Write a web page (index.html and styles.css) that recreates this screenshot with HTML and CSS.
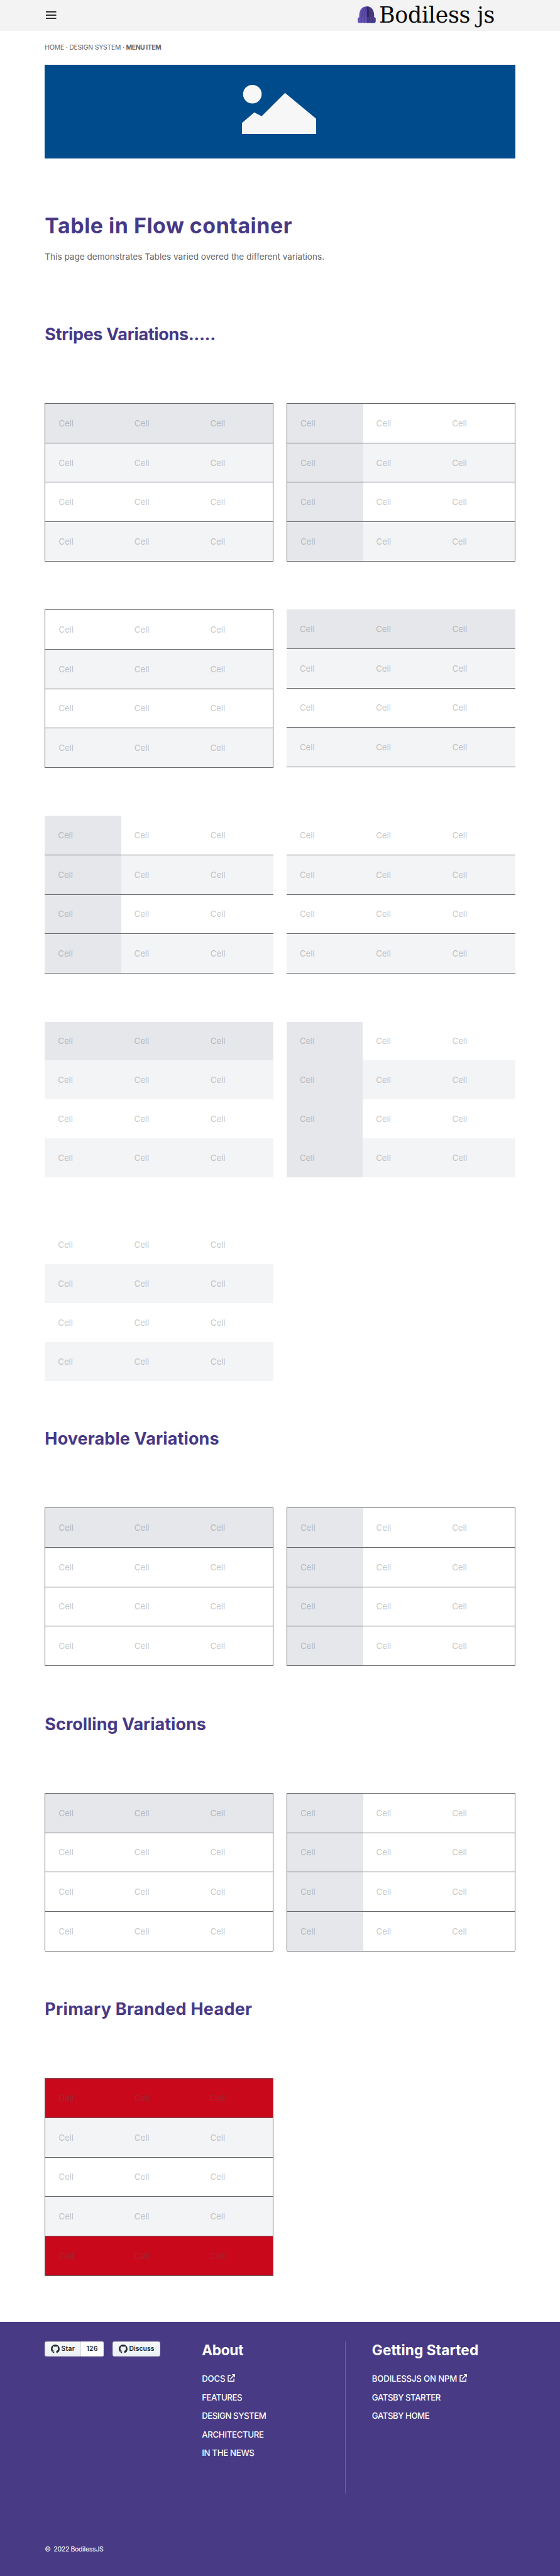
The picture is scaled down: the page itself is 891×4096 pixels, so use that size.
FILE: index.html
```html
<!DOCTYPE html>
<html lang="en">
<head>
<meta charset="utf-8">
<title>Table in Flow container</title>
<link rel="stylesheet" href="styles.css">
</head>
<body>
<header class="header">
  <svg class="menu-icon" viewBox="0 0 19 14"><path d="M0 0h19v2H0zM0 6h19v2H0zM0 12h19v2H0z" fill="#222"/></svg>
  <div class="logo">
    <svg class="hat" viewBox="0 0 33 31">
      <path d="M3 21C2 8 7 0.3 16.500 0.300S31 8 30 21z" fill="#5f4db0"/>
      <path d="M17 0.300C26 0.500 31 8 30 21H17z" fill="#493b8a"/>
      <path d="M8 21C8 12 10 5 14 2M13 21c0-9 1-15 3-20M24 21c0-8-1-15-5-19M28 21c0-8-2-13-5-17" fill="none" stroke="#3b2f6e" stroke-width=".8"/>
      <path d="M17.500 21c0-8 .5-15-.5-20M20.500 21c0-8 0-14-2-19" fill="none" stroke="#2a204f" stroke-width="1.200"/>
      <rect x="0.200" y="20" width="32.600" height="10.500" rx="2.500" fill="#6452b4"/>
      <path d="M17 20h13.300a2.500 2.500 0 0 1 2.500 2.500V28a2.500 2.500 0 0 1-2.500 2.500H17z" fill="#4b3d90"/>
      <path d="M6.500 20.500v9.500M12 20.500v9.500M17.500 20.500v9.500M21 20.500v9.500M26.500 20.500v9.500" stroke="#3b2f6e" stroke-width=".9"/>
    </svg>
    <span class="wordmark">Bodiless js</span>
  </div>
</header>
<main class="main">
  <nav class="crumbs">HOME · DESIGN SYSTEM · <b>MENU ITEM</b></nav>
  <div class="hero">
    <svg class="hero-art" viewBox="0 0 136 90"><circle cx="19" cy="17" r="17" fill="#f7f7f7"/><path d="M0 69.400 22.500 50.300 36 57.300 78.700 14.600 135.600 61.800V90H0z" fill="#f7f7f7"/></svg>
  </div>
  <h1 class="title">Table in Flow container</h1>
  <p class="intro">This page demonstrates Tables varied overed the different variations.</p>

  <h2 class="heading heading-first">Stripes Variations.....</h2>
  <div class="tables">
    <div class="table boxed striped head-row"><div class="row"><span>Cell</span><span>Cell</span><span>Cell</span></div><div class="row"><span>Cell</span><span>Cell</span><span>Cell</span></div><div class="row"><span>Cell</span><span>Cell</span><span>Cell</span></div><div class="row"><span>Cell</span><span>Cell</span><span>Cell</span></div></div>
    <div class="table boxed striped head-col"><div class="row"><span>Cell</span><span>Cell</span><span>Cell</span></div><div class="row"><span>Cell</span><span>Cell</span><span>Cell</span></div><div class="row"><span>Cell</span><span>Cell</span><span>Cell</span></div><div class="row"><span>Cell</span><span>Cell</span><span>Cell</span></div></div>
    <div class="table boxed striped"><div class="row"><span>Cell</span><span>Cell</span><span>Cell</span></div><div class="row"><span>Cell</span><span>Cell</span><span>Cell</span></div><div class="row"><span>Cell</span><span>Cell</span><span>Cell</span></div><div class="row"><span>Cell</span><span>Cell</span><span>Cell</span></div></div>
    <div class="table lined striped head-row"><div class="row"><span>Cell</span><span>Cell</span><span>Cell</span></div><div class="row"><span>Cell</span><span>Cell</span><span>Cell</span></div><div class="row"><span>Cell</span><span>Cell</span><span>Cell</span></div><div class="row"><span>Cell</span><span>Cell</span><span>Cell</span></div></div>
    <div class="table lined striped head-col"><div class="row"><span>Cell</span><span>Cell</span><span>Cell</span></div><div class="row"><span>Cell</span><span>Cell</span><span>Cell</span></div><div class="row"><span>Cell</span><span>Cell</span><span>Cell</span></div><div class="row"><span>Cell</span><span>Cell</span><span>Cell</span></div></div>
    <div class="table lined striped"><div class="row"><span>Cell</span><span>Cell</span><span>Cell</span></div><div class="row"><span>Cell</span><span>Cell</span><span>Cell</span></div><div class="row"><span>Cell</span><span>Cell</span><span>Cell</span></div><div class="row"><span>Cell</span><span>Cell</span><span>Cell</span></div></div>
    <div class="table plain striped head-row"><div class="row"><span>Cell</span><span>Cell</span><span>Cell</span></div><div class="row"><span>Cell</span><span>Cell</span><span>Cell</span></div><div class="row"><span>Cell</span><span>Cell</span><span>Cell</span></div><div class="row"><span>Cell</span><span>Cell</span><span>Cell</span></div></div>
    <div class="table plain striped head-col"><div class="row"><span>Cell</span><span>Cell</span><span>Cell</span></div><div class="row"><span>Cell</span><span>Cell</span><span>Cell</span></div><div class="row"><span>Cell</span><span>Cell</span><span>Cell</span></div><div class="row"><span>Cell</span><span>Cell</span><span>Cell</span></div></div>
    <div class="table plain striped"><div class="row"><span>Cell</span><span>Cell</span><span>Cell</span></div><div class="row"><span>Cell</span><span>Cell</span><span>Cell</span></div><div class="row"><span>Cell</span><span>Cell</span><span>Cell</span></div><div class="row"><span>Cell</span><span>Cell</span><span>Cell</span></div></div>
  </div>

  <h2 class="heading heading-hover">Hoverable Variations</h2>
  <div class="tables">
    <div class="table boxed head-row"><div class="row"><span>Cell</span><span>Cell</span><span>Cell</span></div><div class="row"><span>Cell</span><span>Cell</span><span>Cell</span></div><div class="row"><span>Cell</span><span>Cell</span><span>Cell</span></div><div class="row"><span>Cell</span><span>Cell</span><span>Cell</span></div></div>
    <div class="table boxed head-col"><div class="row"><span>Cell</span><span>Cell</span><span>Cell</span></div><div class="row"><span>Cell</span><span>Cell</span><span>Cell</span></div><div class="row"><span>Cell</span><span>Cell</span><span>Cell</span></div><div class="row"><span>Cell</span><span>Cell</span><span>Cell</span></div></div>
  </div>

  <h2 class="heading">Scrolling Variations</h2>
  <div class="tables">
    <div class="table boxed head-row"><div class="row"><span>Cell</span><span>Cell</span><span>Cell</span></div><div class="row"><span>Cell</span><span>Cell</span><span>Cell</span></div><div class="row"><span>Cell</span><span>Cell</span><span>Cell</span></div><div class="row"><span>Cell</span><span>Cell</span><span>Cell</span></div></div>
    <div class="table boxed head-col"><div class="row"><span>Cell</span><span>Cell</span><span>Cell</span></div><div class="row"><span>Cell</span><span>Cell</span><span>Cell</span></div><div class="row"><span>Cell</span><span>Cell</span><span>Cell</span></div><div class="row"><span>Cell</span><span>Cell</span><span>Cell</span></div></div>
  </div>

  <h2 class="heading heading-branded">Primary Branded Header</h2>
  <div class="tables">
    <div class="table boxed striped branded"><div class="row"><span>Cell</span><span>Cell</span><span>Cell</span></div><div class="row"><span>Cell</span><span>Cell</span><span>Cell</span></div><div class="row"><span>Cell</span><span>Cell</span><span>Cell</span></div><div class="row"><span>Cell</span><span>Cell</span><span>Cell</span></div><div class="row"><span>Cell</span><span>Cell</span><span>Cell</span></div></div>
  </div>
</main>
<footer class="footer">
  <div class="columns">
    <div class="buttons">
      <div class="gh"><div class="gh-main"><svg class="octocat" viewBox="0 0 16 16"><path fill="#24292e" d="M8 0C3.580 0 0 3.580 0 8c0 3.540 2.290 6.530 5.470 7.590.4.070.55-.17.55-.38 0-.19-.01-.82-.01-1.490-2.010.37-2.530-.49-2.690-.94-.09-.23-.48-.94-.82-1.130-.28-.15-.68-.52-.01-.53.63-.01 1.080.58 1.230.82.72 1.210 1.870.87 2.330.66.07-.52.28-.87.51-1.070-1.780-.2-3.640-.89-3.640-3.950 0-.87.31-1.590.82-2.150-.08-.2-.36-1.020.08-2.120 0 0 .67-.21 2.200.82.64-.18 1.320-.27 2-.27s1.360.09 2 .27c1.530-1.040 2.200-.82 2.200-.82.44 1.100.16 1.920.08 2.120.51.56.82 1.270.82 2.150 0 3.070-1.870 3.750-3.650 3.950.29.25.54.73.54 1.480 0 1.070-.01 1.930-.01 2.200 0 .21.15.46.55.38A8.010 8.010 0 0 0 16 8c0-4.420-3.580-8-8-8z"/></svg>Star</div><div class="gh-count">126</div></div>
      <div class="gh"><div class="gh-main gh-only"><svg class="octocat" viewBox="0 0 16 16"><path fill="#24292e" d="M8 0C3.580 0 0 3.580 0 8c0 3.540 2.290 6.530 5.470 7.590.4.070.55-.17.55-.38 0-.19-.01-.82-.01-1.490-2.010.37-2.530-.49-2.690-.94-.09-.23-.48-.94-.82-1.130-.28-.15-.68-.52-.01-.53.63-.01 1.080.58 1.230.82.72 1.210 1.870.87 2.330.66.07-.52.28-.87.51-1.070-1.780-.2-3.640-.89-3.640-3.950 0-.87.31-1.590.82-2.150-.08-.2-.36-1.020.08-2.120 0 0 .67-.21 2.200.82.64-.18 1.320-.27 2-.27s1.360.09 2 .27c1.530-1.040 2.200-.82 2.200-.82.44 1.100.16 1.920.08 2.120.51.56.82 1.270.82 2.150 0 3.070-1.870 3.750-3.650 3.950.29.25.54.73.54 1.480 0 1.070-.01 1.930-.01 2.200 0 .21.15.46.55.38A8.010 8.010 0 0 0 16 8c0-4.420-3.580-8-8-8z"/></svg>Discuss</div></div>
    </div>
    <div class="about">
      <h3 class="foot-title tight-title">About</h3>
      <div class="link snug">DOCS<svg class="ext" viewBox="0 0 14 14"><path d="M5.500 2.500H1.200V13H11.700V8M4.500 9.500 12 2" fill="none" stroke="#fff" stroke-width="1.700"/><path d="M7.800 0H14v6.200z" fill="#fff"/></svg></div>
      <div class="link tighter">FEATURES</div>
      <div class="link tighter">DESIGN SYSTEM</div>
      <div class="link tight">ARCHITECTURE</div>
      <div class="link tight">IN THE NEWS</div>
    </div>
    <div class="started">
      <h3 class="foot-title">Getting Started</h3>
      <div class="link snug">BODILESSJS ON NPM<svg class="ext" viewBox="0 0 14 14"><path d="M5.500 2.500H1.200V13H11.700V8M4.500 9.500 12 2" fill="none" stroke="#fff" stroke-width="1.700"/><path d="M7.800 0H14v6.200z" fill="#fff"/></svg></div>
      <div class="link tighter">GATSBY STARTER</div>
      <div class="link tighter">GATSBY HOME</div>
    </div>
  </div>
  <div class="copyright"><span class="mark">©</span><span>2022 BodilessJS</span></div>
</footer>
</body>
</html>
```
FILE: styles.css
```css
html { font-size: 8.7038px; }
* { box-sizing: border-box; }
body { margin: 0; height: 4096px; overflow: hidden; background: #fff; color: #63666a; font: 1.6rem/1.5 Inter, "Liberation Sans", sans-serif; display: flex; flex-direction: column; }
svg { display: block; flex: none; }

.header { flex: none; height: 5.6rem; background: #f3f3f3; display: flex; align-items: center; justify-content: space-between; padding: 0 11.9rem 0 8.4rem; }
.menu-icon { width: 1.9rem; height: 1.4rem; }
.logo { display: flex; align-items: flex-start; height: 5.6rem; gap: .6rem; }
.hat { width: 3.3rem; height: 3.1rem; margin-top: 1.1rem; }
.wordmark { width: 21.2rem; font: 4rem/5.6rem "DejaVu Serif", serif; letter-spacing: -.03rem; color: #0a0a0a; white-space: nowrap; }

.main { flex: none; width: 86rem; margin-left: 8.2rem; }
.crumbs { height: 6.2rem; padding-top: 2.16rem; font-size: 1.2rem; line-height: 1.8rem; letter-spacing: -.024rem; white-space: pre; }
.crumbs b { letter-spacing: -.056rem; }
.hero { height: 17.2rem; background: #004b8b; display: flex; align-items: flex-start; padding: 3.67rem 0 0 36rem; }
.hero-art { width: 13.6rem; height: 9rem; }
.title { margin: 9.8rem 0 2.17rem; font-size: 3.9rem; line-height: 4.8rem; letter-spacing: .058rem; color: #483985; }
.intro { margin: 0; font-size: 1.56rem; line-height: 2.4rem; }
.heading { margin: 8.7rem 0 10.5rem; font-size: 3.1rem; line-height: 4rem; color: #483985; }
.heading-first { margin-top: 11rem; letter-spacing: -.04rem; }
.heading-hover { letter-spacing: .014rem; }
.heading-branded { letter-spacing: .032rem; }

.tables { display: grid; grid-template-columns: 41.8rem 41.8rem; column-gap: 2.4rem; row-gap: 8.8rem; align-items: start; }
.table { color: rgba(90, 95, 100, .36); font-size: 1.55rem; letter-spacing: -.02rem; }
.row { display: grid; grid-template-columns: repeat(3, 1fr); height: 7.2rem; }
.row span { display: flex; align-items: center; padding-left: 2.4rem; }
.boxed { border: 1px solid #63666a; border-bottom: 0; height: 28.9rem; }
.boxed .row, .lined .row { border-bottom: 1px solid #63666a; }
.plain .row { height: 7.1rem; }
.striped .row:nth-child(even) { background: #f3f4f6; }
.head-row .row:first-child, .head-col .row span:first-child { background: #e5e7eb; }
.branded { height: 36.1rem; }
.branded .row:first-child, .branded .row:last-child { background: #c9081b; }

.footer { flex: 1; margin-top: 8.4rem; background: #483a84; color: #fff; padding: 3.6rem 0 0 8.2rem; }
.columns { display: flex; height: 27.8rem; }
.buttons { width: 28.7rem; display: flex; align-items: flex-start; gap: 1.6rem; }
.gh { display: flex; height: 2.8rem; color: #24292e; font-weight: 600; font-size: 1.2rem; line-height: 2.6rem; }
.gh-main { display: flex; align-items: center; gap: .3rem; width: 6.6rem; padding-left: 1rem; border: 1px solid #d1d5d9; border-radius: .3rem 0 0 .3rem; background: linear-gradient(#f6f8fa, #ebf0f4); letter-spacing: .02rem; }
.gh-only { width: 8.7rem; border-radius: .3rem; letter-spacing: 0; }
.gh-count { width: 4.2rem; text-align: center; background: #fff; border: 1px solid #e2e5e8; border-left: 0; border-radius: 0 .3rem .3rem 0; letter-spacing: .02rem; }
.octocat { width: 1.6rem; height: 1.6rem; }
.about { width: 26.3rem; border-right: 1px solid #6c6876; }
.started { padding-left: 4.8rem; }
.foot-title { margin: 0 0 2rem; font-size: 2.6rem; line-height: 3.2rem; letter-spacing: .013rem; }
.tight-title { letter-spacing: -.03rem; }
.link { display: flex; align-items: center; gap: .4rem; height: 3.4rem; font-size: 1.52rem; font-weight: 500; }
.tight { letter-spacing: -.036rem; }
.tighter { letter-spacing: -.052rem; }
.snug { letter-spacing: -.02rem; }
.ext { width: 1.4rem; height: 1.4rem; margin-top: -.4rem; }
.copyright { display: flex; padding-top: 9.2rem; font-size: 1.2rem; line-height: 2rem; font-weight: 500; letter-spacing: -.035rem; color: #efedf5; }
.mark { width: 1.6rem; }
```
